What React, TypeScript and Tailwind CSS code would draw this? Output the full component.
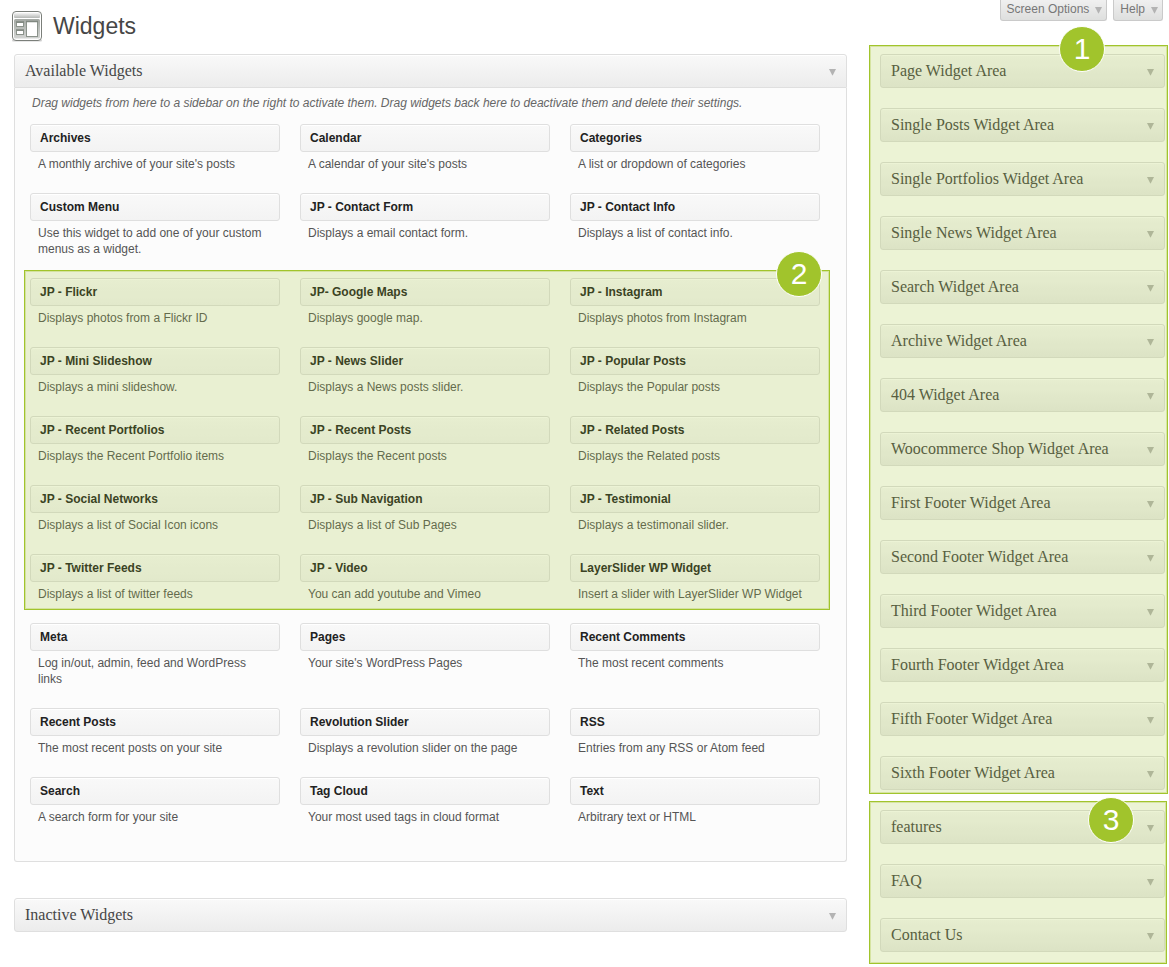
import React from 'react';

type Widget = { name: string; text: string };

const coreWidgets: Widget[] = [
  { name: 'Archives', text: "A monthly archive of your site's posts" },
  { name: 'Calendar', text: "A calendar of your site's posts" },
  { name: 'Categories', text: 'A list or dropdown of categories' },
  { name: 'Custom Menu', text: 'Use this widget to add one of your custom menus as a widget.' },
  { name: 'JP - Contact Form', text: 'Displays a email contact form.' },
  { name: 'JP - Contact Info', text: 'Displays a list of contact info.' },
];

const themeWidgets: Widget[] = [
  { name: 'JP - Flickr', text: 'Displays photos from a Flickr ID' },
  { name: 'JP- Google Maps', text: 'Displays google map.' },
  { name: 'JP - Instagram', text: 'Displays photos from Instagram' },
  { name: 'JP - Mini Slideshow', text: 'Displays a mini slideshow.' },
  { name: 'JP - News Slider', text: 'Displays a News posts slider.' },
  { name: 'JP - Popular Posts', text: 'Displays the Popular posts' },
  { name: 'JP - Recent Portfolios', text: 'Displays the Recent Portfolio items' },
  { name: 'JP - Recent Posts', text: 'Displays the Recent posts' },
  { name: 'JP - Related Posts', text: 'Displays the Related posts' },
  { name: 'JP - Social Networks', text: 'Displays a list of Social Icon icons' },
  { name: 'JP - Sub Navigation', text: 'Displays a list of Sub Pages' },
  { name: 'JP - Testimonial', text: 'Displays a testimonail slider.' },
  { name: 'JP - Twitter Feeds', text: 'Displays a list of twitter feeds' },
  { name: 'JP - Video', text: 'You can add youtube and Vimeo' },
  { name: 'LayerSlider WP Widget', text: 'Insert a slider with LayerSlider WP Widget' },
];

const moreWidgets: Widget[] = [
  { name: 'Meta', text: 'Log in/out, admin, feed and WordPress links' },
  { name: 'Pages', text: "Your site's WordPress Pages" },
  { name: 'Recent Comments', text: 'The most recent comments' },
  { name: 'Recent Posts', text: 'The most recent posts on your site' },
  { name: 'Revolution Slider', text: 'Displays a revolution slider on the page' },
  { name: 'RSS', text: 'Entries from any RSS or Atom feed' },
  { name: 'Search', text: 'A search form for your site' },
  { name: 'Tag Cloud', text: 'Your most used tags in cloud format' },
  { name: 'Text', text: 'Arbitrary text or HTML' },
];

const themeAreas = [
  'Page Widget Area',
  'Single Posts Widget Area',
  'Single Portfolios Widget Area',
  'Single News Widget Area',
  'Search Widget Area',
  'Archive Widget Area',
  '404 Widget Area',
  'Woocommerce Shop Widget Area',
  'First Footer Widget Area',
  'Second Footer Widget Area',
  'Third Footer Widget Area',
  'Fourth Footer Widget Area',
  'Fifth Footer Widget Area',
  'Sixth Footer Widget Area',
];

const customAreas = ['features', 'FAQ', 'Contact Us'];

function Arrow() {
  return (
    <svg className="h-[9px] w-[7px] shrink-0" viewBox="0 0 7 9" aria-hidden="true">
      <path d="M0 2h7L3.5 8.8z" fill="#b3b3b3" />
    </svg>
  );
}

function BarHeader({ title, open = false }: { title: string; open?: boolean }) {
  return (
    <button
      type="button"
      aria-expanded={open}
      className={`flex h-[34px] w-full items-center justify-between border border-[#dfdfdf] bg-linear-to-b from-[#f9f9f9] to-[#ececec] px-[10px] text-left font-['Liberation_Serif',serif] text-base leading-5 text-[#464646] shadow-[inset_0_1px_0_#fff] ${
        open ? 'rounded-t-[3px]' : 'rounded-[3px]'
      }`}
    >
      <span>{title}</span>
      <Arrow />
    </button>
  );
}

function WidgetGrid({ items }: { items: Widget[] }) {
  return (
    <ul className="grid grid-cols-3 gap-x-5 gap-y-[21px]">
      {items.map((w) => (
        <li key={w.name}>
          <h4 className="flex h-7 cursor-move items-center rounded-[3px] border border-[#dfdfdf] bg-linear-to-b from-[#f9f9f9] to-[#f3f3f3] px-[9px] text-xs font-bold text-[#222] shadow-[inset_0_1px_0_#fff]">
            {w.name}
          </h4>
          <p className="px-2 pt-1 text-xs leading-4 text-[#555]">{w.text}</p>
        </li>
      ))}
    </ul>
  );
}

function Tint() {
  return (
    <div className="absolute inset-0 border border-[#a1c42c] bg-[#a1c42c]/20 shadow-[inset_0_0_0_1px_rgba(161,196,44,0.3)]" />
  );
}

function Badge({ n, place }: { n: number; place: string }) {
  return (
    <span
      className={`absolute flex h-[46px] w-[46px] items-center justify-center rounded-full border border-white bg-[#a1c42c] text-[30px] leading-none text-white ${place}`}
    >
      {n}
    </span>
  );
}

function AreaGroup({ areas }: { areas: string[] }) {
  return (
    <div className="flex flex-col gap-5">
      {areas.map((a) => (
        <BarHeader key={a} title={a} />
      ))}
    </div>
  );
}

function WidgetsIcon() {
  return (
    <svg className="h-8 w-8" viewBox="0 0 32 32" aria-hidden="true">
      <defs>
        <linearGradient id="bar" x1="0" y1="0" x2="0" y2="1">
          <stop offset="0" stopColor="#f4f4f4" />
          <stop offset="1" stopColor="#b4b7b4" />
        </linearGradient>
        <linearGradient id="body" x1="0" y1="0" x2="0" y2="1">
          <stop offset="0" stopColor="#a4a9a4" />
          <stop offset="1" stopColor="#d2d4d2" />
        </linearGradient>
      </defs>
      <rect x="0" y="29.5" width="30" height="2" rx="1" fill="#d2d2d2" />
      <rect x="0.5" y="1.5" width="29" height="29" rx="3.5" fill="#fff" stroke="#7b7f7a" />
      <rect x="2" y="3" width="26" height="5" rx="1" fill="url(#bar)" />
      <rect x="2" y="9" width="26" height="19.5" rx="1.5" fill="url(#body)" />
      <rect x="4.5" y="12.5" width="7" height="4" fill="#fff" stroke="#8b938b" />
      <rect x="4.5" y="20.5" width="7" height="4" fill="#fff" stroke="#8b938b" />
      <rect x="14.5" y="11.5" width="11" height="15" fill="#fff" stroke="#8b938b" />
      <path d="M4 12h8M4 20h8M14 11.5h12" stroke="#808880" strokeWidth="1.5" />
    </svg>
  );
}

function MetaLink({ label }: { label: string }) {
  return (
    <button
      type="button"
      className="flex h-[21px] items-center gap-[6px] rounded-b-[3px] border border-t-0 border-[#cacaca] bg-linear-to-b from-[#f0f0f0] to-[#dedfde] pr-1 pb-[2px] pl-[6px] text-xs leading-4 text-[#777]"
    >
      {label}
      <Arrow />
    </button>
  );
}

export default function App() {
  return (
    <div className="min-h-screen bg-white pb-[3px] font-['Liberation_Sans',Arial,sans-serif]">
      <header className="flex h-[54px] items-start justify-between pr-[6px] pl-3">
        <div className="flex items-center gap-[9px] pt-[10px]">
          <WidgetsIcon />
          <h1 className="text-[23px] leading-8 text-[#464646]">Widgets</h1>
        </div>
        <div className="flex gap-[6px]">
          <MetaLink label="Screen Options" />
          <MetaLink label="Help" />
        </div>
      </header>

      <div className="flex items-start gap-[33px] pr-1 pl-[14px]">
        <main className="min-w-0 flex-1">
          <section>
            <h3>
              <BarHeader title="Available Widgets" open />
            </h3>
            <div className="rounded-b-[3px] border border-t-0 border-[#dfdfdf] bg-[#fcfcfc] pr-[26px] pb-9 pl-[15px]">
              <p className="px-[2px] pt-[7px] pb-[13px] text-xs leading-4 text-[#666] italic">
                Drag widgets from here to a sidebar on the right to activate them. Drag widgets back here to
                deactivate them and delete their settings.
              </p>
              <div className="flex flex-col gap-[21px]">
                <WidgetGrid items={coreWidgets} />
                <div className="relative">
                  <WidgetGrid items={themeWidgets} />
                  <div className="pointer-events-none absolute -top-2 -right-[10px] -bottom-2 -left-[6px]">
                    <Tint />
                    <Badge n={2} place="-top-[19px] right-2" />
                  </div>
                </div>
                <WidgetGrid items={moreWidgets} />
              </div>
            </div>
          </section>

          <section className="mt-9">
            <h3>
              <BarHeader title="Inactive Widgets" />
            </h3>
          </section>
        </main>

        <aside className="flex w-[285px] shrink-0 flex-col gap-5">
          <section className="relative">
            <AreaGroup areas={themeAreas} />
            <div className="pointer-events-none absolute -top-[9px] -right-[3px] -bottom-1 -left-[11px]">
              <Tint />
              <Badge n={1} place="-top-[19px] right-[63px]" />
            </div>
          </section>
          <section className="relative">
            <AreaGroup areas={customAreas} />
            <div className="pointer-events-none absolute -top-[9px] -right-[2px] -bottom-3 -left-[11px]">
              <Tint />
              <Badge n={3} place="-top-1 right-[33px]" />
            </div>
          </section>
        </aside>
      </div>
    </div>
  );
}
